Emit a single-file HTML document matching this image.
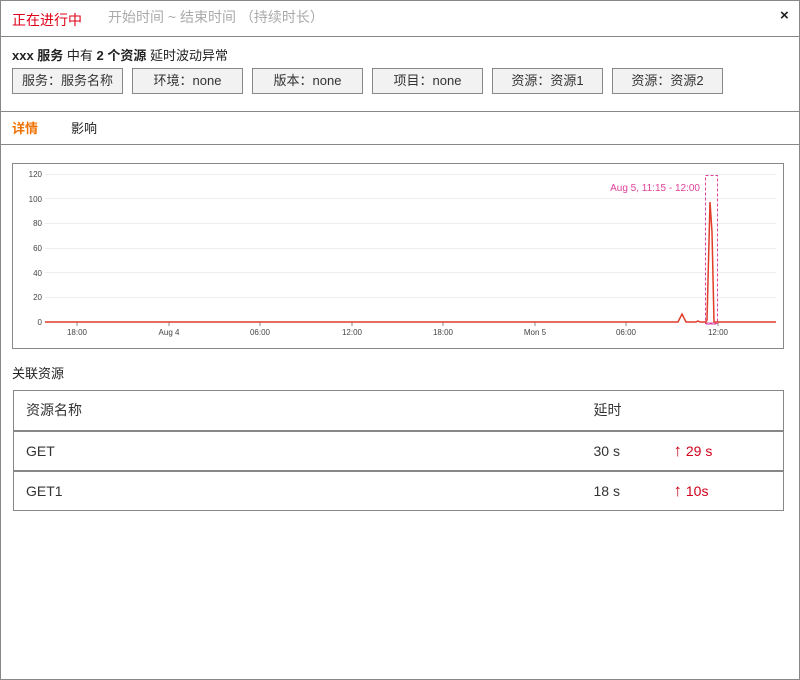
<!DOCTYPE html>
<html><head><meta charset="utf-8"><style>
*{margin:0;padding:0;box-sizing:border-box}
body{width:800px;height:680px;overflow:hidden;background:#fff;font-family:"Liberation Sans","Noto Sans CJK SC",sans-serif;font-size:13px;color:#222;position:relative}
.frame{position:absolute;left:0;top:0;width:800px;height:680px;border:1px solid #888}
.abs{position:absolute}
.hl{position:absolute;left:0;width:800px;height:1px;background:#888}
.tag{position:absolute;top:68px;height:26px;width:111px;border:1px solid #888;background:#f2f2f2;font-size:13px;line-height:24px;text-align:center;color:#333}
table{position:absolute;left:13px;top:390px;width:771px;border-collapse:collapse;border:1px solid #888}
td{height:40px;font-size:14px;color:#333;padding:0}
tr+tr td{border-top:2px solid #888}
</style></head><body>
<div class="frame"></div>
<div class="abs" style="left:12px;top:10px;font-size:14px;color:#e0001a">正在进行中</div>
<div class="abs" style="left:108px;top:7px;font-size:14px;color:#aaa">开始时间 ~ 结束时间 （持续时长）</div>
<div class="abs" style="left:780px;top:7px;font-size:15px;font-weight:bold;color:#222">×</div>
<div class="hl" style="top:36px"></div>
<div class="abs" style="left:12px;top:45px;font-size:13px;color:#222"><b>xxx 服务</b> 中有 <b>2 个资源</b> 延时波动异常</div>
<div class="tag" style="left:12px">服务：服务名称</div>
<div class="tag" style="left:132px">环境：none</div>
<div class="tag" style="left:252px">版本：none</div>
<div class="tag" style="left:372px">项目：none</div>
<div class="tag" style="left:492px">资源：资源1</div>
<div class="tag" style="left:612px">资源：资源2</div>
<div class="hl" style="top:111px"></div>
<div class="abs" style="left:12px;top:118px;font-size:13px;color:#f07000;font-weight:bold">详情</div>
<div class="abs" style="left:71px;top:118px;font-size:13px;color:#222">影响</div>
<div class="hl" style="top:144px"></div>
<svg class="abs" style="left:0;top:0" width="800" height="360" font-family="Liberation Sans, sans-serif">
<rect x="12.5" y="163.5" width="771" height="185" fill="#fff" stroke="#888"/>
<g stroke="#eee" stroke-width="1">
<line x1="45" x2="776" y1="174.5" y2="174.5"/><line x1="45" x2="776" y1="198.5" y2="198.5"/>
<line x1="45" x2="776" y1="223.5" y2="223.5"/><line x1="45" x2="776" y1="248.5" y2="248.5"/>
<line x1="45" x2="776" y1="272.5" y2="272.5"/><line x1="45" x2="776" y1="297.5" y2="297.5"/>
</g>
<g font-size="8" fill="#444" text-anchor="end">
<text x="42" y="177">120</text><text x="42" y="202">100</text><text x="42" y="226">80</text>
<text x="42" y="251">60</text><text x="42" y="276">40</text><text x="42" y="300">20</text><text x="42" y="325">0</text>
</g>
<g font-size="8" fill="#444" text-anchor="middle">
<text x="77" y="335">18:00</text><text x="169" y="335">Aug 4</text><text x="260" y="335">06:00</text>
<text x="352" y="335">12:00</text><text x="443" y="335">18:00</text><text x="535" y="335">Mon 5</text>
<text x="626" y="335">06:00</text><text x="718" y="335">12:00</text>
</g>
<g stroke="#888"><line x1="77" x2="77" y1="322" y2="326"/><line x1="169" x2="169" y1="322" y2="326"/><line x1="260" x2="260" y1="322" y2="326"/><line x1="352" x2="352" y1="322" y2="326"/><line x1="443" x2="443" y1="322" y2="326"/><line x1="535" x2="535" y1="322" y2="326"/><line x1="626" x2="626" y1="322" y2="326"/><line x1="718" x2="718" y1="322" y2="326"/></g>
<rect x="706" y="322" width="10" height="3" fill="#e8a0d0"/>
<polyline fill="none" stroke="#e03c28" stroke-width="1.5" points="45,322 678,322 682,314 686,322 696,322 698,321 700,322 706,322 707,320 710,202 712,232 714,322 776,322"/>
<rect x="705.5" y="175.5" width="12" height="148" fill="none" stroke="#e0409a" stroke-dasharray="3,2"/>
<text x="700" y="191" font-size="10" fill="#e0409a" text-anchor="end">Aug 5, 11:15 - 12:00</text>
</svg>
<div class="abs" style="left:12px;top:363px;font-size:13px;color:#222">关联资源</div>
<table>
<tr><td style="padding-left:12px">资源名称</td><td style="width:80px">延时</td><td style="width:110px"></td></tr>
<tr><td style="padding-left:12px">GET</td><td>30 s</td><td style="color:#d0001a"><span style="font-size:17px">↑</span> 29 s</td></tr>
<tr><td style="padding-left:12px">GET1</td><td>18 s</td><td style="color:#d0001a"><span style="font-size:17px">↑</span> 10s</td></tr>
</table>
</body></html>
